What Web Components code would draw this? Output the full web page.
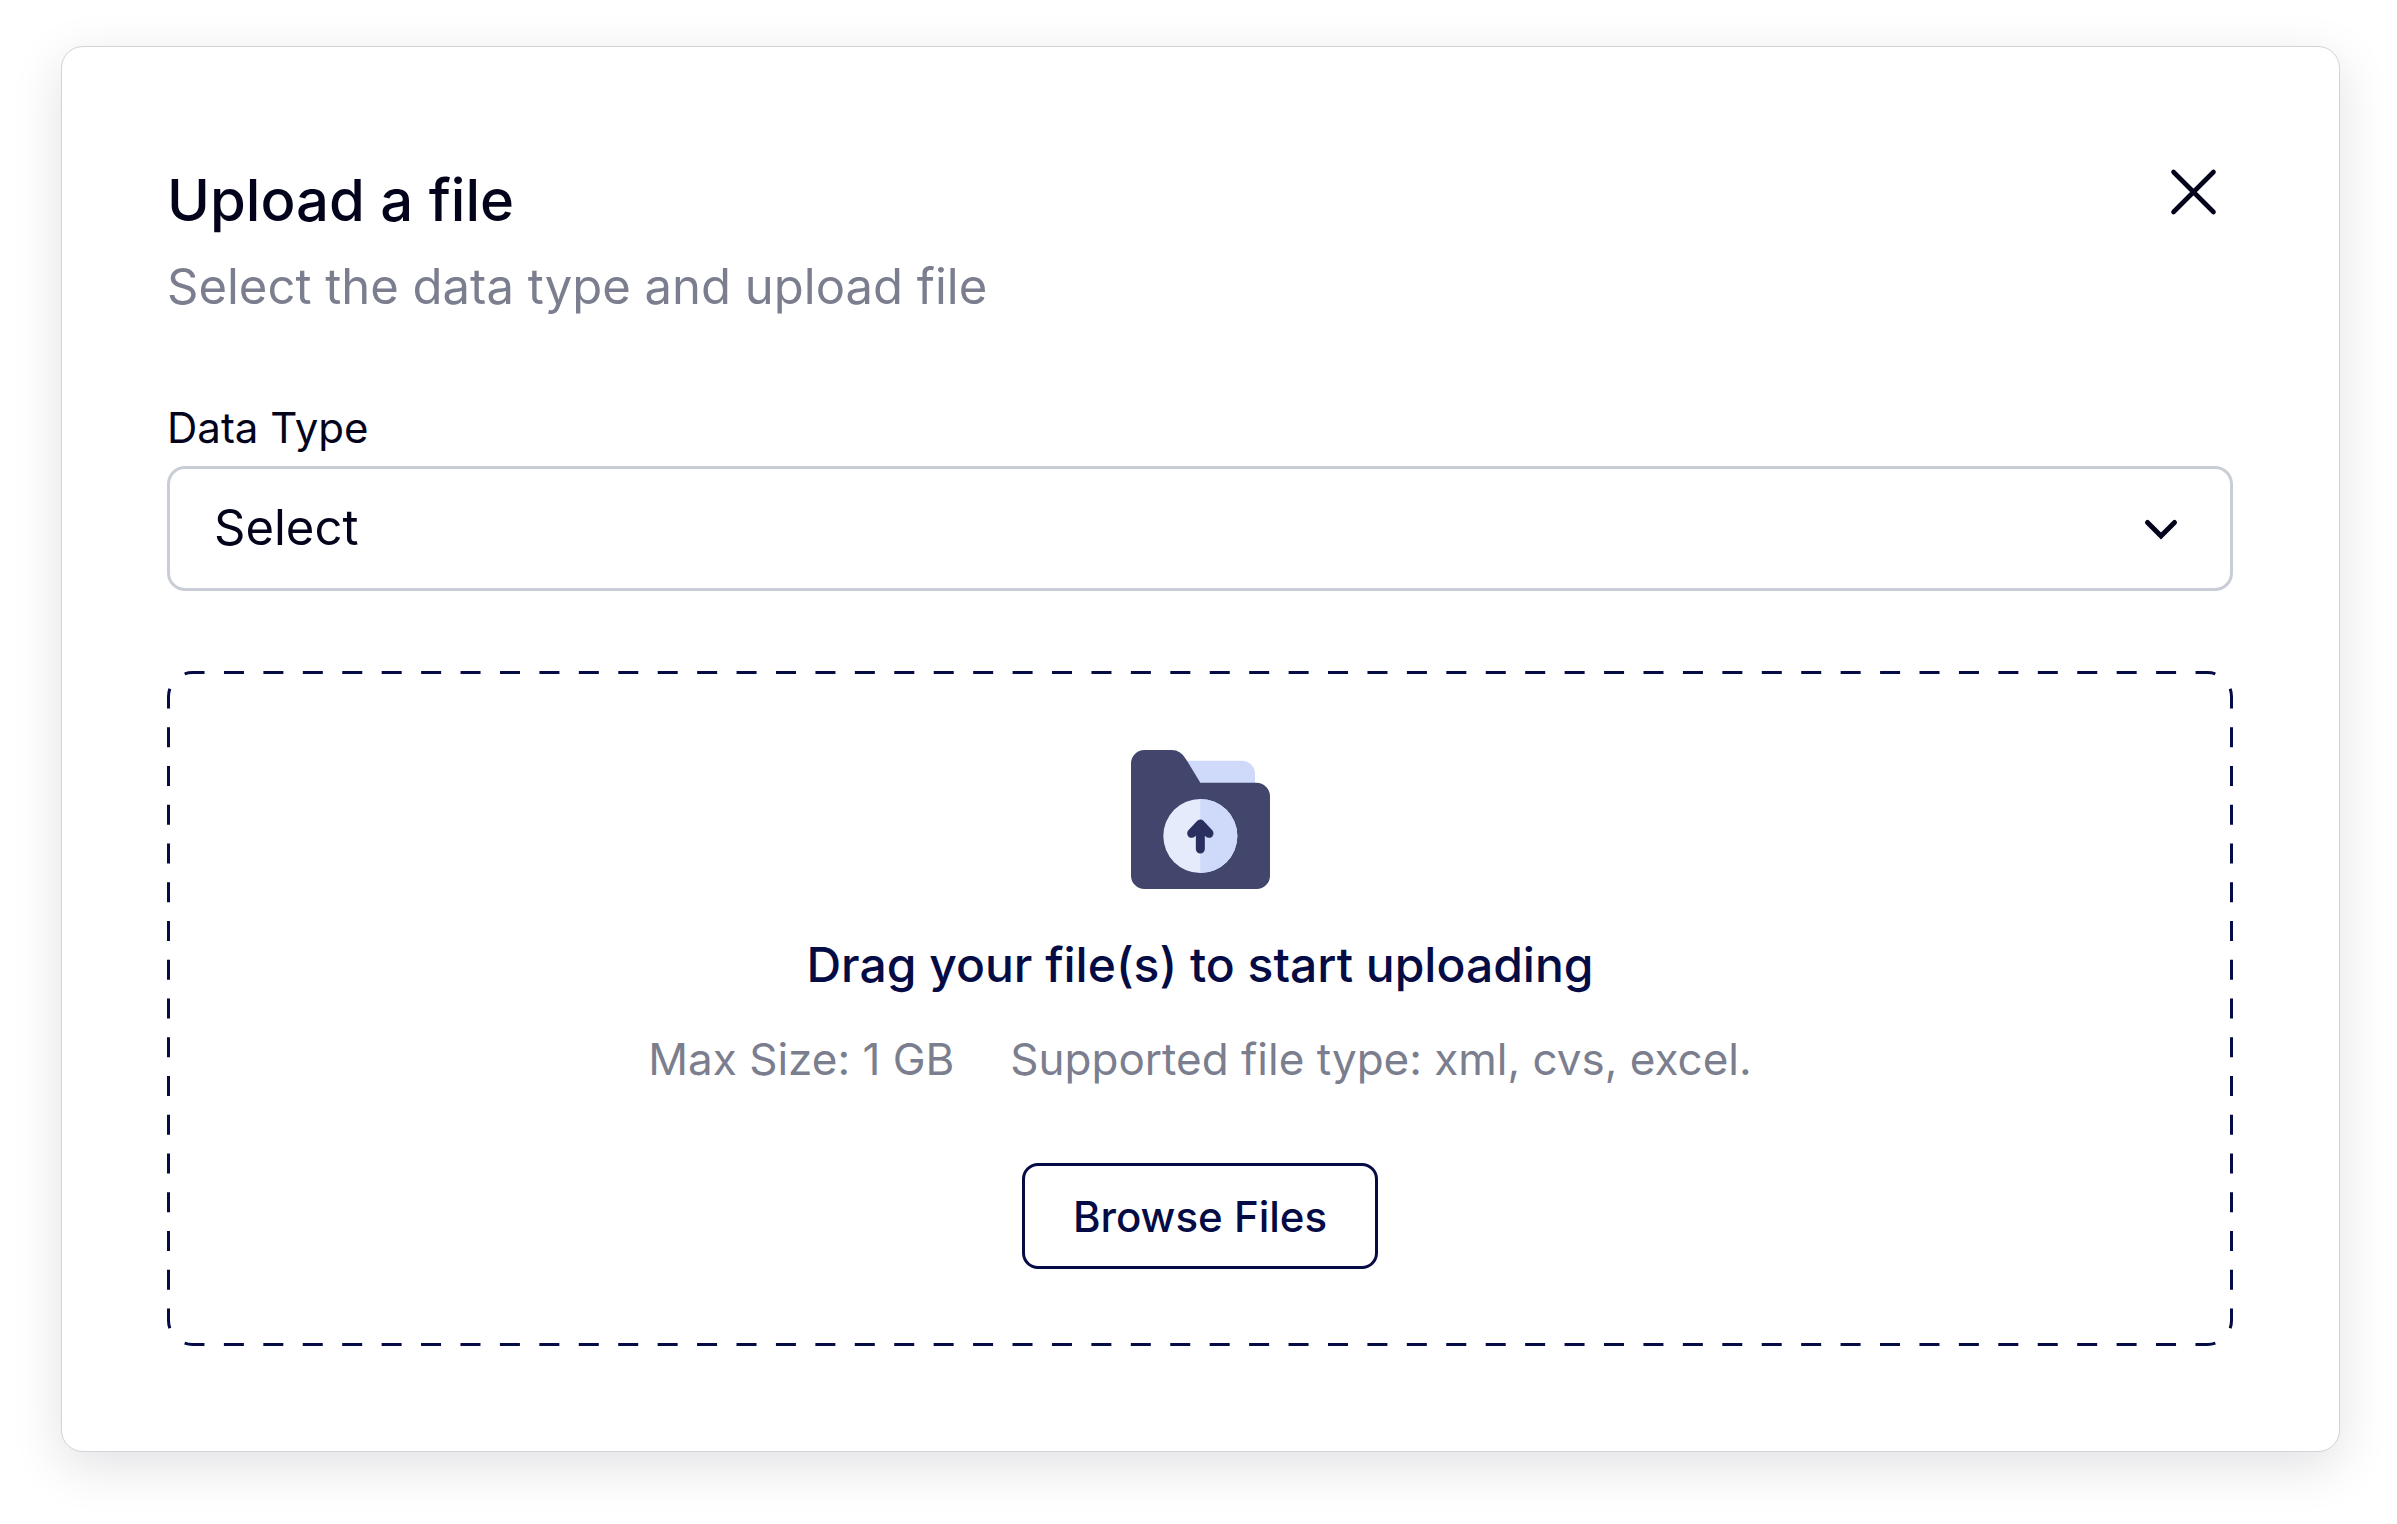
<!DOCTYPE html>
<html lang="en">
<head>
<meta charset="utf-8">
<meta name="viewport" content="width=device-width, initial-scale=1">
<title>Upload a file</title>
<style>
  body {
    margin: 0;
    padding: 46px 57px 72px 61px;
    background: #fff;
    color: #03041b;
    font-family: Inter, "Liberation Sans", sans-serif;
    --ink: #03041b;
    --navy: #050b44;
    --muted: #7b7e8e;
    --line: #c9ced6;
  }
</style>
</head>
<body>
<upload-dialog>
  <span slot="title">Upload a file</span>
  <span slot="subtitle">Select the data type and upload file</span>
  <select-field label="Data Type" placeholder="Select"></select-field>
  <drop-zone>
    <folder-icon slot="icon"></folder-icon>
    <span slot="heading">Drag your file(s) to start uploading</span>
    <span slot="hint">Max Size: 1 GB</span>
    <span slot="hint">Supported file type: xml, cvs, excel.</span>
    <outline-button slot="action">Browse Files</outline-button>
  </drop-zone>
</upload-dialog>

<script>
function define(name, html, setup) {
  const template = document.createElement('template');
  template.innerHTML = html;
  customElements.define(name, class extends HTMLElement {
    constructor() {
      super();
      this.attachShadow({ mode: 'open' }).append(template.content.cloneNode(true));
    }
    connectedCallback() {
      if (setup) setup(this, this.shadowRoot);
    }
  });
}

define('close-button', `
  <style>
    :host { display: block; }
    button { display: block; margin: 0; padding: 0; border: 0; background: none; color: var(--ink); cursor: pointer; }
    svg { display: block; width: 80px; height: 80px; }
  </style>
  <button type="button" aria-label="Close">
    <svg viewBox="0 0 80 80" fill="none" stroke="currentColor" stroke-width="4.6" stroke-linecap="round" aria-hidden="true">
      <path d="M20.500 20 60.500 60M60.500 20 20.500 60"/>
    </svg>
  </button>
`);

define('select-field', `
  <style>
    :host { display: block; }
    label { display: block; font-size: 42px; line-height: 52px; margin-bottom: 12px; }
    .box { display: grid; align-items: center; }
    .box > * { grid-area: 1 / 1; }
    select {
      appearance: none; width: 100%; height: 125px; margin: 0; padding: 0 100px 2px 44px;
      border: 3px solid var(--line); border-radius: 18px; background: #fff;
      color: inherit; font-family: inherit; font-size: 49px; line-height: 60px;
    }
    svg { justify-self: end; width: 42px; height: 42px; margin-right: 51px; pointer-events: none; }
  </style>
  <label for="type"></label>
  <div class="box">
    <select id="type"><option></option></select>
    <svg viewBox="0 0 42 42" fill="none" stroke="currentColor" stroke-width="5" stroke-linecap="round" aria-hidden="true">
      <path d="M7.500 14.500 21 28 34.500 14.500"/>
    </svg>
  </div>
`, (host, root) => {
  root.querySelector('label').textContent = host.getAttribute('label');
  root.querySelector('option').textContent = host.getAttribute('placeholder');
});

define('folder-icon', `
  <style>
    :host { display: block; }
    svg { display: block; width: 139px; height: 139px; }
  </style>
  <svg viewBox="0 0 417 417" aria-hidden="true">
    <path fill="#cfd9f9" d="M150 32H332A40 40 0 0 1 372 72V120H150Z"/>
    <path fill="#42466d" d="M40 0H122Q150 0 166 29L208 98H376A41 41 0 0 1 417 139V377A40 40 0 0 1 377 417H40A40 40 0 0 1 0 377V40A40 40 0 0 1 40 0Z"/>
    <circle fill="#e6ebfc" cx="208" cy="258" r="111"/>
    <path fill="#cfd9f9" d="M208 147A111 111 0 0 1 208 369Z"/>
    <path fill="none" stroke="#2b2f60" stroke-width="27" stroke-linecap="round" stroke-linejoin="round" d="M208 226V297M182 250 208 222 234 250"/>
  </svg>
`);

define('outline-button', `
  <style>
    :host { display: block; }
    button {
      height: 106px; margin: 0; padding: 2px 48px 0; border: 3px solid var(--navy); border-radius: 16px;
      background: #fff; color: var(--navy); font-family: inherit; font-size: 42px; font-weight: 500;
      line-height: 52px; cursor: pointer;
    }
  </style>
  <button type="button"><slot></slot></button>
`);

/* Dashed frame: every side starts and ends with a dash that bends a little into the corner. */
define('drop-zone', `
  <style>
    :host { display: block; position: relative; }
    .frame { position: absolute; inset: 0; width: 100%; height: 100%; fill: none; stroke: var(--navy); stroke-width: 3; pointer-events: none; }
    .content { display: flex; flex-direction: column; align-items: center; padding: 79px 40px 77px; text-align: center; }
    .heading { margin: 46px 0 0; color: var(--navy); font-size: 48px; line-height: 60px; font-weight: 500; }
    .hints { display: flex; flex-wrap: wrap; justify-content: center; gap: 0 56px; margin: 38px 0 78px; color: var(--muted); font-size: 44px; line-height: 52px; }
  </style>
  <svg class="frame" aria-hidden="true"></svg>
  <div class="content">
    <slot name="icon"></slot>
    <h2 class="heading"><slot name="heading"></slot></h2>
    <div class="hints"><slot name="hint"></slot></div>
    <slot name="action"></slot>
  </div>
`, (host, root) => {
  const svg = root.querySelector('.frame');
  const radius = 24, bend = 8, dash = 20, period = 39.5, edge = 1.5;
  const along = radius * Math.sin(bend / radius);
  const drop = radius * (1 - Math.cos(bend / radius));
  const side = (length, transform) => {
    const straight = length - 2 * radius;
    const total = straight + 2 * bend;
    const count = Math.max(1, Math.round((total - dash) / period));
    const gap = (total - dash) / count - dash;
    return `<path transform="${transform}" stroke-dasharray="${dash} ${gap}" d="M${radius - along} ${drop}` +
      `A${radius} ${radius} 0 0 1 ${radius} 0H${length - radius}` +
      `A${radius} ${radius} 0 0 1 ${length - radius + along} ${drop}"/>`;
  };
  const draw = () => {
    const w = host.clientWidth - 2 * edge, h = host.clientHeight - 2 * edge;
    if (w <= 0 || h <= 0) return;
    svg.innerHTML =
      side(w, `translate(${edge} ${edge})`) +
      side(h, `translate(${edge + w} ${edge}) rotate(90)`) +
      side(w, `translate(${edge + w} ${edge + h}) rotate(180)`) +
      side(h, `translate(${edge} ${edge + h}) rotate(270)`);
  };
  draw();
  new ResizeObserver(draw).observe(host);
});

define('upload-dialog', `
  <style>
    :host { display: block; }
    section {
      padding: 117px 106px 105px 105px; border: 1px solid #d3d3d9; border-radius: 22px; background: #fff;
      box-shadow: 0 14px 52px rgba(10, 10, 30, .12);
    }
    header { display: flex; justify-content: space-between; align-items: flex-start; margin-bottom: 85px; }
    h1 { margin: 0; font-size: 58px; line-height: 72px; font-weight: 500; }
    p { margin: 21px 0 0; color: var(--muted); font-size: 49px; line-height: 60px; }
    close-button { margin: -12px 0 0; }
    .body { display: flex; flex-direction: column; gap: 80px; }
  </style>
  <section role="dialog" aria-labelledby="title">
    <header>
      <div>
        <h1 id="title"><slot name="title"></slot></h1>
        <p><slot name="subtitle"></slot></p>
      </div>
      <close-button></close-button>
    </header>
    <div class="body"><slot></slot></div>
  </section>
`);
</script>
</body>
</html>
